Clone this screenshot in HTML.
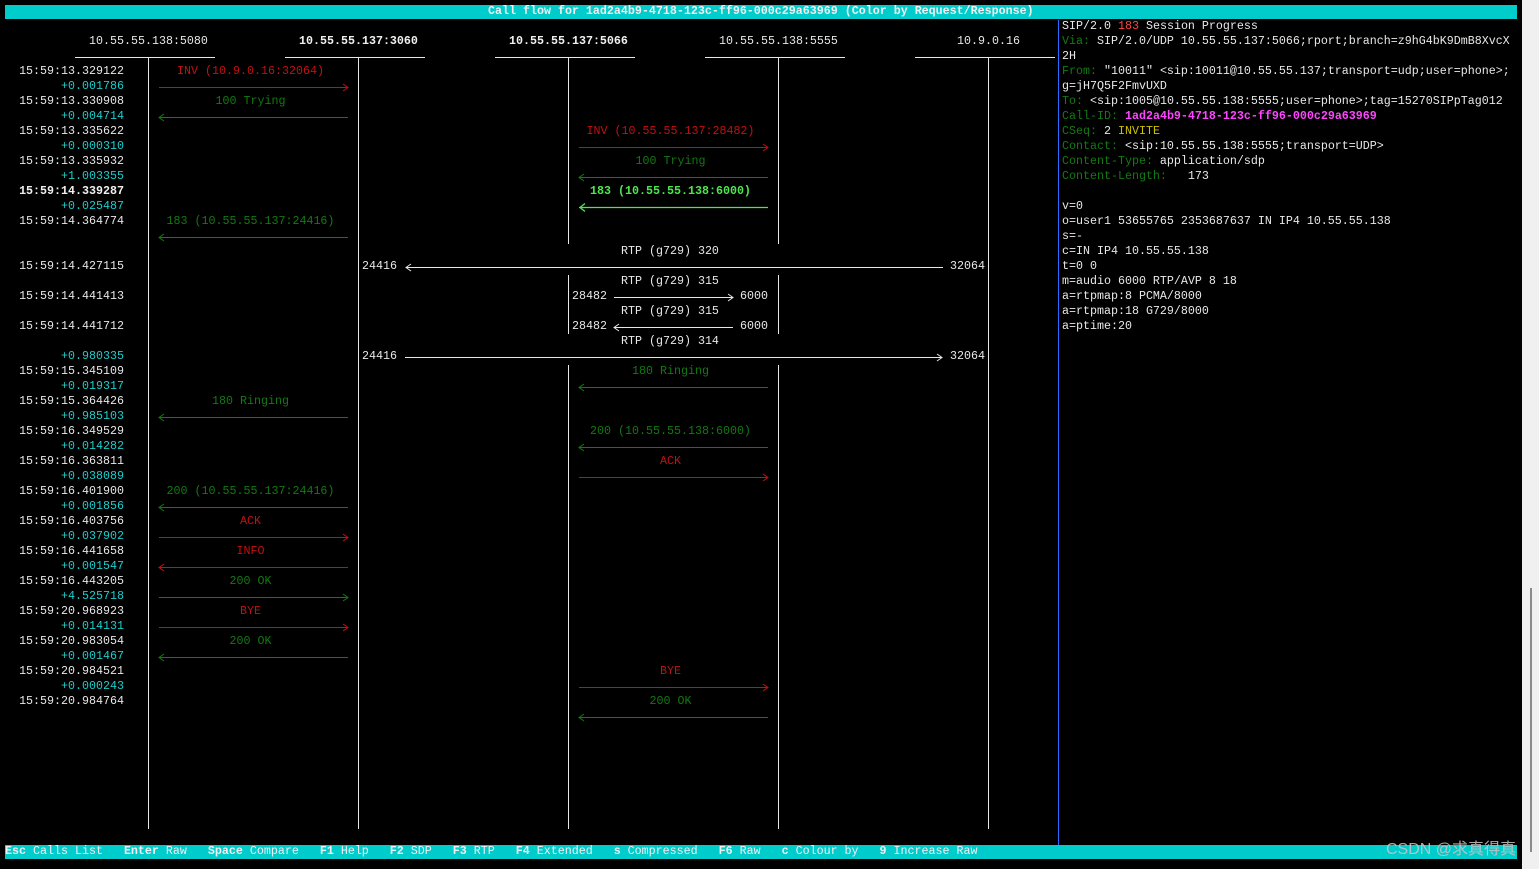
<!DOCTYPE html>
<html><head><meta charset="utf-8"><style>
html,body{margin:0;padding:0;background:#000;width:1539px;height:869px;overflow:hidden;position:relative}
.t{position:absolute;white-space:pre;line-height:15px;height:15px;font-family:"Liberation Mono","DejaVu Sans Mono",monospace;font-size:11.67px;color:#e8e8e8}
.b{font-weight:bold}
.r{color:#c41010}.g{color:#127a12}.G{color:#4ee64e;font-weight:bold}.c{color:#1ccdcd}.w{color:#f0f0f0}
.L{left:148px;width:205px;text-align:center}
.R{left:568px;width:205px;text-align:center}
.tm{left:0;width:124px;text-align:right}
.lbl{color:#137a13}
</style></head><body>
<div style="position:absolute;left:1522px;top:0;width:17px;height:869px;background:#f0f0f0"></div>
<div style="position:absolute;left:1530px;top:588px;width:2px;height:264px;background:#8a8a8a"></div>
<div style="position:absolute;left:5px;top:5px;width:1512px;height:14px;background:#00cccc"></div>
<div class="t b w" style="left:488px;top:4px">Call flow for 1ad2a4b9-4718-123c-ff96-000c29a63969 (Color by Request/Response)</div>
<div style="position:absolute;left:5px;top:845px;width:1512px;height:14px;background:#00cccc"></div>
<div class="t w" style="top:844px;left:5px"><b>Esc</b> Calls List   <b>Enter</b> Raw   <b>Space</b> Compare   <b>F1</b> Help   <b>F2</b> SDP   <b>F3</b> RTP   <b>F4</b> Extended   <b>s</b> Compressed   <b>F6</b> Raw   <b>c</b> Colour by   <b>9</b> Increase Raw</div>
<div class="t" style="left:1386px;top:840px;font-family:'Liberation Sans','Noto Sans CJK SC',sans-serif;font-size:16px;line-height:20px;height:20px;color:#c8c8c8;opacity:.85">CSDN @求真得真</div>

<svg width="1539" height="869" style="position:absolute;left:0;top:0" fill="none">
<g stroke="#e8e8e8" stroke-width="1">
<line x1="148.5" y1="57" x2="148.5" y2="829"/>
<line x1="358.5" y1="57" x2="358.5" y2="829"/>
<line x1="988.5" y1="57" x2="988.5" y2="829"/>
<line x1="568.5" y1="57" x2="568.5" y2="244"/><line x1="568.5" y1="275" x2="568.5" y2="334"/><line x1="568.5" y1="365" x2="568.5" y2="829"/>
<line x1="778.5" y1="57" x2="778.5" y2="244"/><line x1="778.5" y1="275" x2="778.5" y2="334"/><line x1="778.5" y1="365" x2="778.5" y2="829"/>
<line x1="75" y1="57.5" x2="215" y2="57.5"/><line x1="285" y1="57.5" x2="425" y2="57.5"/><line x1="495" y1="57.5" x2="635" y2="57.5"/><line x1="705" y1="57.5" x2="845" y2="57.5"/><line x1="915" y1="57.5" x2="1055" y2="57.5"/>
<line x1="406" y1="267.5" x2="943" y2="267.5"/><polyline points="411,264 406,267.5 411,271"/>
<line x1="614" y1="297.5" x2="733" y2="297.5"/><polyline points="728,294 733,297.5 728,301"/>
<line x1="614" y1="327.5" x2="733" y2="327.5"/><polyline points="619,324 614,327.5 619,331"/>
<line x1="405" y1="357.5" x2="942" y2="357.5"/><polyline points="937,354 942,357.5 937,361"/>
</g>
<line x1="1058.5" y1="20" x2="1058.5" y2="845" stroke="#2a6cff"/>
<g id="arrows" stroke-width="1">
<!-- right arrows -->
<g stroke="#c41010">
<line x1="159" y1="87.5" x2="348" y2="87.5"/><polyline points="343,84 348,87.5 343,91"/>
<line x1="579" y1="147.5" x2="768" y2="147.5"/><polyline points="763,144 768,147.5 763,151"/>
<line x1="579" y1="477.5" x2="768" y2="477.5"/><polyline points="763,474 768,477.5 763,481"/>
<line x1="159" y1="537.5" x2="348" y2="537.5"/><polyline points="343,534 348,537.5 343,541"/>
<line x1="159" y1="567.5" x2="348" y2="567.5"/><polyline points="164,564 159,567.5 164,571"/>
<line x1="159" y1="627.5" x2="348" y2="627.5"/><polyline points="343,624 348,627.5 343,631"/>
<line x1="579" y1="687.5" x2="768" y2="687.5"/><polyline points="763,684 768,687.5 763,691"/>
</g>
<g stroke="#127a12">
<line x1="159" y1="117.5" x2="348" y2="117.5"/><polyline points="164,114 159,117.5 164,121"/>
<line x1="579" y1="177.5" x2="768" y2="177.5"/><polyline points="584,174 579,177.5 584,181"/>
<line x1="159" y1="237.5" x2="348" y2="237.5"/><polyline points="164,234 159,237.5 164,241"/>
<line x1="579" y1="387.5" x2="768" y2="387.5"/><polyline points="584,384 579,387.5 584,391"/>
<line x1="159" y1="417.5" x2="348" y2="417.5"/><polyline points="164,414 159,417.5 164,421"/>
<line x1="579" y1="447.5" x2="768" y2="447.5"/><polyline points="584,444 579,447.5 584,451"/>
<line x1="159" y1="507.5" x2="348" y2="507.5"/><polyline points="164,504 159,507.5 164,511"/>
<line x1="159" y1="597.5" x2="348" y2="597.5"/><polyline points="343,594 348,597.5 343,601"/>
<line x1="159" y1="657.5" x2="348" y2="657.5"/><polyline points="164,654 159,657.5 164,661"/>
<line x1="579" y1="717.5" x2="768" y2="717.5"/><polyline points="584,714 579,717.5 584,721"/>
</g>
<g stroke="#4ee64e" stroke-width="1.3">
<line x1="579" y1="207.5" x2="768" y2="207.5"/><polyline points="585,203.5 580,207.5 585,211.5"/>
</g>
</g>
</svg>

<div class="t" style="left:89px;top:34px">10.55.55.138:5080</div>
<div class="t b w" style="left:299px;top:34px">10.55.55.137:3060</div>
<div class="t b w" style="left:509px;top:34px">10.55.55.137:5066</div>
<div class="t" style="left:719px;top:34px">10.55.55.138:5555</div>
<div class="t" style="left:957px;top:34px">10.9.0.16</div>

<div class="t tm" style="top:64px">15:59:13.329122</div>
<div class="t tm c" style="top:79px">+0.001786</div>
<div class="t tm" style="top:94px">15:59:13.330908</div>
<div class="t tm c" style="top:109px">+0.004714</div>
<div class="t tm" style="top:124px">15:59:13.335622</div>
<div class="t tm c" style="top:139px">+0.000310</div>
<div class="t tm" style="top:154px">15:59:13.335932</div>
<div class="t tm c" style="top:169px">+1.003355</div>
<div class="t tm b w" style="top:184px">15:59:14.339287</div>
<div class="t tm c" style="top:199px">+0.025487</div>
<div class="t tm" style="top:214px">15:59:14.364774</div>
<div class="t tm" style="top:259px">15:59:14.427115</div>
<div class="t tm" style="top:289px">15:59:14.441413</div>
<div class="t tm" style="top:319px">15:59:14.441712</div>
<div class="t tm c" style="top:349px">+0.980335</div>
<div class="t tm" style="top:364px">15:59:15.345109</div>
<div class="t tm c" style="top:379px">+0.019317</div>
<div class="t tm" style="top:394px">15:59:15.364426</div>
<div class="t tm c" style="top:409px">+0.985103</div>
<div class="t tm" style="top:424px">15:59:16.349529</div>
<div class="t tm c" style="top:439px">+0.014282</div>
<div class="t tm" style="top:454px">15:59:16.363811</div>
<div class="t tm c" style="top:469px">+0.038089</div>
<div class="t tm" style="top:484px">15:59:16.401900</div>
<div class="t tm c" style="top:499px">+0.001856</div>
<div class="t tm" style="top:514px">15:59:16.403756</div>
<div class="t tm c" style="top:529px">+0.037902</div>
<div class="t tm" style="top:544px">15:59:16.441658</div>
<div class="t tm c" style="top:559px">+0.001547</div>
<div class="t tm" style="top:574px">15:59:16.443205</div>
<div class="t tm c" style="top:589px">+4.525718</div>
<div class="t tm" style="top:604px">15:59:20.968923</div>
<div class="t tm c" style="top:619px">+0.014131</div>
<div class="t tm" style="top:634px">15:59:20.983054</div>
<div class="t tm c" style="top:649px">+0.001467</div>
<div class="t tm" style="top:664px">15:59:20.984521</div>
<div class="t tm c" style="top:679px">+0.000243</div>
<div class="t tm" style="top:694px">15:59:20.984764</div>

<div class="t L r" style="top:64px">INV (10.9.0.16:32064)</div>
<div class="t L g" style="top:94px">100 Trying</div>
<div class="t R r" style="top:124px">INV (10.55.55.137:28482)</div>
<div class="t R g" style="top:154px">100 Trying</div>
<div class="t R G" style="top:184px">183 (10.55.55.138:6000)</div>
<div class="t L g" style="top:214px">183 (10.55.55.137:24416)</div>
<div class="t" style="left:621px;top:244px">RTP (g729) 320</div>
<div class="t" style="left:362px;top:259px">24416</div>
<div class="t" style="left:950px;top:259px">32064</div>
<div class="t" style="left:621px;top:274px">RTP (g729) 315</div>
<div class="t" style="left:572px;top:289px">28482</div>
<div class="t" style="left:740px;top:289px">6000</div>
<div class="t" style="left:621px;top:304px">RTP (g729) 315</div>
<div class="t" style="left:572px;top:319px">28482</div>
<div class="t" style="left:740px;top:319px">6000</div>
<div class="t" style="left:621px;top:334px">RTP (g729) 314</div>
<div class="t" style="left:362px;top:349px">24416</div>
<div class="t" style="left:950px;top:349px">32064</div>
<div class="t R g" style="top:364px">180 Ringing</div>
<div class="t L g" style="top:394px">180 Ringing</div>
<div class="t R g" style="top:424px">200 (10.55.55.138:6000)</div>
<div class="t R r" style="top:454px">ACK</div>
<div class="t L g" style="top:484px">200 (10.55.55.137:24416)</div>
<div class="t L r" style="top:514px">ACK</div>
<div class="t L r" style="top:544px">INFO</div>
<div class="t L g" style="top:574px">200 OK</div>
<div class="t L r" style="top:604px">BYE</div>
<div class="t L g" style="top:634px">200 OK</div>
<div class="t R r" style="top:664px">BYE</div>
<div class="t R g" style="top:694px">200 OK</div>

<div style="position:absolute;left:1062px;top:19px;width:460px;height:330px;overflow:hidden">
<div class="t" style="left:0;top:0">SIP/2.0 <span style="color:#ff4545">183</span> Session Progress</div>
<div class="t" style="left:0;top:15px"><span class="lbl">Via:</span> SIP/2.0/UDP 10.55.55.137:5066;rport;branch=z9hG4bK9DmB8XvcX</div>
<div class="t" style="left:0;top:30px">2H</div>
<div class="t" style="left:0;top:45px"><span class="lbl">From:</span> "10011" &lt;sip:10011@10.55.55.137;transport=udp;user=phone&gt;;</div>
<div class="t" style="left:0;top:60px">g=jH7Q5F2FmvUXD</div>
<div class="t" style="left:0;top:75px"><span class="lbl">To:</span> &lt;sip:1005@10.55.55.138:5555;user=phone&gt;;tag=15270SIPpTag012</div>
<div class="t" style="left:0;top:90px"><span class="lbl">Call-ID:</span> <b style="color:#ff45ff">1ad2a4b9-4718-123c-ff96-000c29a63969</b></div>
<div class="t" style="left:0;top:105px"><span class="lbl">CSeq:</span> 2 <span style="color:#d0c000">INVITE</span></div>
<div class="t" style="left:0;top:120px"><span class="lbl">Contact:</span> &lt;sip:10.55.55.138:5555;transport=UDP&gt;</div>
<div class="t" style="left:0;top:135px"><span class="lbl">Content-Type:</span> application/sdp</div>
<div class="t" style="left:0;top:150px"><span class="lbl">Content-Length:</span>   173</div>
<div class="t" style="left:0;top:180px">v=0</div>
<div class="t" style="left:0;top:195px">o=user1 53655765 2353687637 IN IP4 10.55.55.138</div>
<div class="t" style="left:0;top:210px">s=-</div>
<div class="t" style="left:0;top:225px">c=IN IP4 10.55.55.138</div>
<div class="t" style="left:0;top:240px">t=0 0</div>
<div class="t" style="left:0;top:255px">m=audio 6000 RTP/AVP 8 18</div>
<div class="t" style="left:0;top:270px">a=rtpmap:8 PCMA/8000</div>
<div class="t" style="left:0;top:285px">a=rtpmap:18 G729/8000</div>
<div class="t" style="left:0;top:300px">a=ptime:20</div>
</div>
</body></html>
